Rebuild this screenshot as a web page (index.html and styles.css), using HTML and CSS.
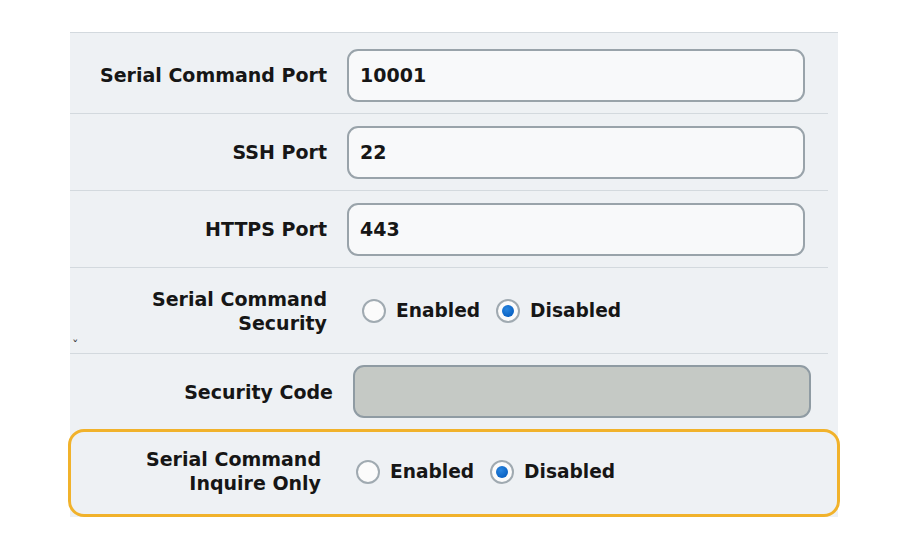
FILE: index.html
```html
<!DOCTYPE html>
<html lang="en">
<head>
    <meta charset="UTF-8">
    <meta name="viewport" content="width=device-width, initial-scale=1.0">
    <title>Network Settings</title>
    <link rel="stylesheet" href="styles.css">
</head>
<body>
    <div class="panel">
        <div class="row">
            <label class="label" for="serial-port">Serial Command Port</label>
            <input class="field" id="serial-port" type="text" value="10001">
        </div>
        <div class="row">
            <label class="label" for="ssh-port">SSH Port</label>
            <input class="field" id="ssh-port" type="text" value="22">
        </div>
        <div class="row">
            <label class="label" for="https-port">HTTPS Port</label>
            <input class="field" id="https-port" type="text" value="443">
        </div>
        <div class="row row-tall">
            <span class="label">Serial Command<br>Security</span>
            <div class="options">
                <label class="option"><span class="radio"></span>Enabled</label>
                <label class="option"><span class="radio checked"></span>Disabled</label>
            </div>
            <span class="caret">ˇ</span>
        </div>
        <div class="row row-code">
            <label class="label" for="security-code">Security Code</label>
            <input class="field" id="security-code" type="text" disabled>
        </div>
        <div class="row row-tall row-highlight">
            <span class="label">Serial Command<br>Inquire Only</span>
            <div class="options">
                <label class="option"><span class="radio"></span>Enabled</label>
                <label class="option"><span class="radio checked"></span>Disabled</label>
            </div>
        </div>
    </div>
</body>
</html>
```

FILE: styles.css
```css
:root {
    --panel-bg: #eef1f4;
    --line-color: #d3d9de;
    --text-color: #161616;
    --field-border: #99a3aa;
    --accent: #f1b22b;
    --radio-blue: #0b63c4;
}

body {
    margin: 0;
    background: #ffffff;
    font-family: "DejaVu Sans", Verdana, sans-serif;
    font-weight: bold;
    font-size: 19px;
    color: var(--text-color);
}

.panel {
    width: 768px;
    margin: 32px 0 0 70px;
    padding-top: 4px;
    background: var(--panel-bg);
    border-top: 1px solid var(--line-color);
}

.row {
    position: relative;
    display: grid;
    grid-template-columns: 257px 458px;
    column-gap: 20px;
    align-items: center;
    height: 76px;
    margin-right: 10px;
    border-bottom: 1px solid var(--line-color);
}

.row-tall {
    height: 85px;
}

.row-code {
    height: 75px;
    padding-left: 6px;
    border-bottom: none;
}

.label {
    text-align: right;
    line-height: 24px;
}

.field {
    box-sizing: border-box;
    height: 53px;
    padding: 0 11px;
    border: 2px solid var(--field-border);
    border-radius: 11px;
    background: #f8f9fa;
    font: inherit;
    color: var(--text-color);
    outline: none;
}

.field:disabled {
    background: #c5c9c5;
    border-color: #8f9ba3;
}

.options {
    display: flex;
    align-items: center;
    gap: 16px;
    padding-left: 15px;
    font-size: 18.6px;
}

.option {
    display: flex;
    align-items: center;
    gap: 10px;
}

.radio {
    box-sizing: border-box;
    width: 24px;
    height: 24px;
    border: 2px solid #a0aab1;
    border-radius: 50%;
    background: #fbfbfb;
    position: relative;
}

.radio.checked::after {
    content: '';
    position: absolute;
    top: 4px;
    left: 4px;
    width: 12px;
    height: 12px;
    border-radius: 50%;
    background: radial-gradient(circle at 40% 35%, #2a86e0, var(--radio-blue) 70%);
}

.caret {
    position: absolute;
    left: 2px;
    bottom: 0;
    font-size: 13px;
    font-weight: normal;
    color: #333;
}

.row-highlight {
    height: 82px;
    margin: 0 -2px;
    grid-template-columns: 250px 458px;
    border: 3px solid var(--accent);
    border-radius: 16px;
    background: var(--panel-bg);
}

.row-highlight .label {
    margin-top: -5px;
}

.row-highlight .options {
    margin-top: -3px;
}
```
